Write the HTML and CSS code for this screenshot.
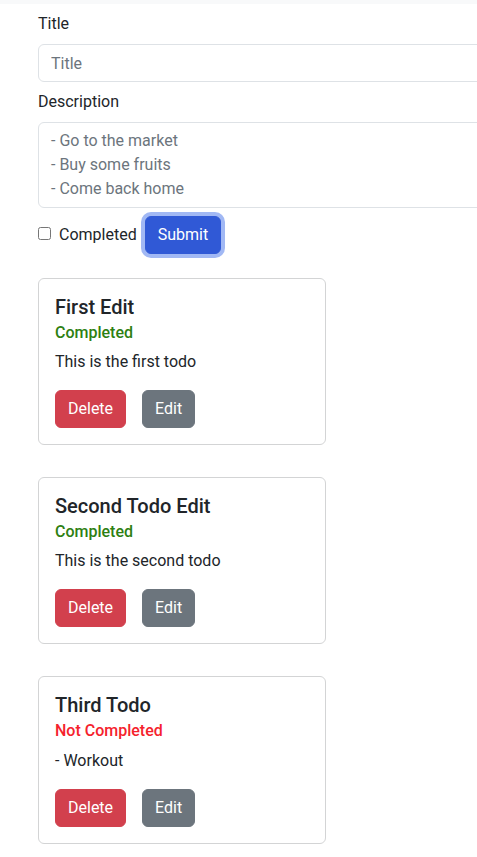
FILE: index.html
```html
<!DOCTYPE html>
<html lang="en">
<head>
<meta charset="utf-8">
<title>Todos</title>
<link rel="stylesheet" href="styles.css">
</head>
<body>
<div class="topbar"></div>
<main class="page">
  <form class="todo-form">
    <label class="form-label" for="title">Title</label>
    <input class="form-control" id="title" type="text" placeholder="Title">
    <label class="form-label" for="desc">Description</label>
    <textarea class="form-control textarea" id="desc" rows="3" placeholder="- Go to the market&#10;- Buy some fruits&#10;- Come back home"></textarea>
    <div class="form-row">
      <input class="check" id="completed" type="checkbox">
      <label class="check-label" for="completed">Completed</label>
      <button type="button" class="btn btn-primary focus">Submit</button>
    </div>
  </form>

  <div class="cards">
    <div class="card">
      <h5 class="card-title">First Edit</h5>
      <h6 class="card-subtitle done">Completed</h6>
      <p class="card-text">This is the first todo</p>
      <div class="actions">
        <button type="button" class="btn btn-danger">Delete</button>
        <button type="button" class="btn btn-secondary">Edit</button>
      </div>
    </div>
    <div class="card">
      <h5 class="card-title">Second Todo Edit</h5>
      <h6 class="card-subtitle done">Completed</h6>
      <p class="card-text">This is the second todo</p>
      <div class="actions">
        <button type="button" class="btn btn-danger">Delete</button>
        <button type="button" class="btn btn-secondary">Edit</button>
      </div>
    </div>
    <div class="card">
      <h5 class="card-title">Third Todo</h5>
      <h6 class="card-subtitle notdone">Not Completed</h6>
      <p class="card-text">- Workout</p>
      <div class="actions">
        <button type="button" class="btn btn-danger">Delete</button>
        <button type="button" class="btn btn-secondary">Edit</button>
      </div>
    </div>
  </div>
</main>
</body>
</html>
```

FILE: styles.css
```css
html { overflow: hidden; }
* { box-sizing: border-box; }
body {
  margin: 0;
  font-family: Roboto, "Liberation Sans", sans-serif;
  font-size: 16px;
  line-height: 1.5;
  color: #212529;
  background: #fff;
}
.topbar {
  height: 4px;
  background: #f8f9fa;
}
.page {
  padding: 8px 0 40px 38px;
}
.todo-form {
  width: 520px;
  display: flex;
  flex-direction: column;
}
.form-label {
  display: block;
  margin-bottom: 8px;
}
.form-control {
  display: block;
  width: 100%;
  height: 38px;
  padding: 6px 12px;
  font: inherit;
  line-height: 1.5;
  color: #212529;
  border: 1px solid #dee2e6;
  border-radius: 6px;
  margin-bottom: 8px;
  background: #fff;
}
.form-control::placeholder { color: #6c757d; }
.textarea {
  height: 86px;
  resize: vertical;
}
.form-row {
  display: flex;
  align-items: center;
}
.check {
  width: 13px;
  height: 13px;
  margin: 0 8px 3px 0;
}
.check-label { line-height: 24px; }
.btn {
  font: inherit;
  line-height: 1.5;
  padding: 6px 12px;
  border: 1px solid transparent;
  border-radius: 6px;
  color: #fff;
  cursor: pointer;
}
.btn-primary {
  background: #3059d6;
  border-color: #3059d6;
  margin-left: 8px;
}
.btn-primary.focus {
  box-shadow: 0 0 0 4px #a1b8f4;
}
.btn-danger { background: #d2404d; border-color: #d2404d; }
.btn-secondary { background: #6c757d; border-color: #6c757d; }
.cards {
  margin-top: 24px;
  display: flex;
  flex-direction: column;
  gap: 32px;
}
.card {
  width: 288px;
  border: 1px solid #d3d4d5;
  border-radius: 6px;
  padding: 16px;
}
.card-title {
  margin: 0 0 8px;
  font-size: 20px;
  font-weight: 500;
  line-height: 1.2;
}
.card-subtitle {
  margin: -4px 0 8px;
  font-size: 16px;
  font-weight: 500;
  line-height: 1.2;
}
.done { color: #2e8012; }
.notdone { color: #f5222d; }
.card-text { margin: 0 0 16px; }
.actions {
  display: flex;
  gap: 16px;
}
```
